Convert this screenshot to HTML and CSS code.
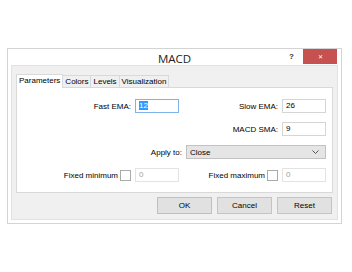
FILE: index.html
```html
<!DOCTYPE html>
<html lang="en">
<head>
    <meta charset="UTF-8">
    <title>MACD</title>
    <link rel="stylesheet" href="styles.css">
</head>
<body>
    <div class="window">
        <div class="titlebar">
            <span class="title">MACD</span>
            <span class="help">?</span>
            <span class="close">&#x2715;</span>
        </div>

        <div class="client">
            <div class="tabs">
                <div class="tab active">Parameters</div>
                <div class="tab">Colors</div>
                <div class="tab">Levels</div>
                <div class="tab">Visualization</div>
            </div>

            <div class="panel">
                <div class="row">
                    <div class="half">
                        <label>Fast EMA:</label>
                        <div class="field focus"><span class="sel">12</span></div>
                    </div>
                    <div class="half right">
                        <label>Slow EMA:</label>
                        <div class="field">26</div>
                    </div>
                </div>
                <div class="row">
                    <div class="half"></div>
                    <div class="half right">
                        <label>MACD SMA:</label>
                        <div class="field">9</div>
                    </div>
                </div>
                <div class="row single">
                    <label>Apply to:</label>
                    <div class="select">
                        <span>Close</span>
                        <svg class="chevron" width="7" height="4" viewBox="0 0 7 4">
                            <path d="M0.5 0.5 L3.5 3.5 L6.5 0.5" fill="none" stroke="#555" stroke-width="1"/>
                        </svg>
                    </div>
                </div>
                <div class="row">
                    <div class="half">
                        <label class="tight">Fixed minimum</label>
                        <div class="check"></div>
                        <div class="field off">0</div>
                    </div>
                    <div class="half right">
                        <label class="tight">Fixed maximum</label>
                        <div class="check"></div>
                        <div class="field off">0</div>
                    </div>
                </div>
            </div>

            <div class="buttons">
                <div class="button default">OK</div>
                <div class="button">Cancel</div>
                <div class="button">Reset</div>
            </div>
        </div>
    </div>
</body>
</html>
```

FILE: styles.css
```css
* {
    box-sizing: border-box;
}

body {
    margin: 0;
    background-color: #ffffff;
    font-family: "Liberation Sans", Arial, sans-serif;
    font-size: 8px;
    color: #000000;
}

.window {
    margin: 48px 0 0 7px;
    width: 335px;
    border: 1px solid #d4d4d4;
    background-color: #ffffff;
    padding: 0 3px 3px 3px;
}

.titlebar {
    position: relative;
    height: 16px;
    padding-top: 3px;
    display: flex;
    align-items: center;
    justify-content: center;
}

.title {
    font-family: "Open Sans", sans-serif;
    font-size: 11.5px;
    color: #222222;
}

.help {
    position: absolute;
    right: 44px;
    top: 3px;
    font-size: 8px;
    font-weight: bold;
    color: #333333;
}

.close {
    position: absolute;
    right: 1px;
    top: 0;
    width: 34px;
    height: 15px;
    background-color: #c75050;
    color: #ffffff;
    font-size: 6px;
    display: flex;
    align-items: center;
    justify-content: center;
}

.client {
    background-color: #f0f0f0;
    border: 1px solid #e2e2e2;
    padding: 8px 4px 5px 4px;
}

.tabs {
    display: flex;
    height: 13px;
}

.tab {
    border: 1px solid #d9d9d9;
    border-bottom: none;
    background-color: #f0f0f0;
    padding: 0 2px;
    margin-top: 1px;
    line-height: 12px;
    margin-left: -1px;
}

.tab:first-child {
    margin-left: 0;
}

.tab.active {
    background-color: #ffffff;
    margin-top: 0;
    height: 14px;
    position: relative;
    z-index: 1;
}

.panel {
    background-color: #ffffff;
    border: 1px solid #d9d9d9;
    padding: 11px 0 10px 0;
    display: flex;
    flex-direction: column;
    gap: 9px;
}

.row {
    display: grid;
    grid-template-columns: 163px 1fr;
    height: 14px;
}

.half {
    display: flex;
    align-items: center;
    justify-content: flex-end;
    padding-right: 1px;
}

.half.right {
    padding-right: 6px;
}

.row.single {
    display: flex;
    align-items: center;
    justify-content: flex-end;
    padding-right: 6px;
}

label {
    margin-right: 4px;
}

label.tight {
    margin-right: 2px;
}

.field {
    width: 44px;
    height: 14px;
    border: 1px solid #d5d5d5;
    background-color: #ffffff;
    padding-left: 3px;
    line-height: 11px;
}

.field.focus {
    border-color: #7eb4ea;
}

.sel {
    background-color: #3399ff;
    color: #ffffff;
}

.field.off {
    border-color: #e3e3e3;
    color: #a0a0a0;
    margin-left: 4px;
}

.check {
    width: 11px;
    height: 11px;
    border: 1px solid #aaaaaa;
    background-color: #ffffff;
}

.select {
    width: 140px;
    height: 14px;
    border: 1px solid #c2c2c2;
    background-color: #e5e5e5;
    padding: 0 0 0 3px;
    display: flex;
    align-items: center;
    justify-content: space-between;
}

.chevron {
    margin-right: 6px;
}

.buttons {
    display: flex;
    justify-content: flex-end;
    gap: 5px;
    margin-top: 4px;
    padding-right: 1px;
}

.button {
    width: 55px;
    height: 17px;
    border: 1px solid #c4c4c4;
    background-color: #e1e1e1;
    display: flex;
    align-items: center;
    justify-content: center;
}

.button.default {
    border-color: #9cc7ef;
}
```
